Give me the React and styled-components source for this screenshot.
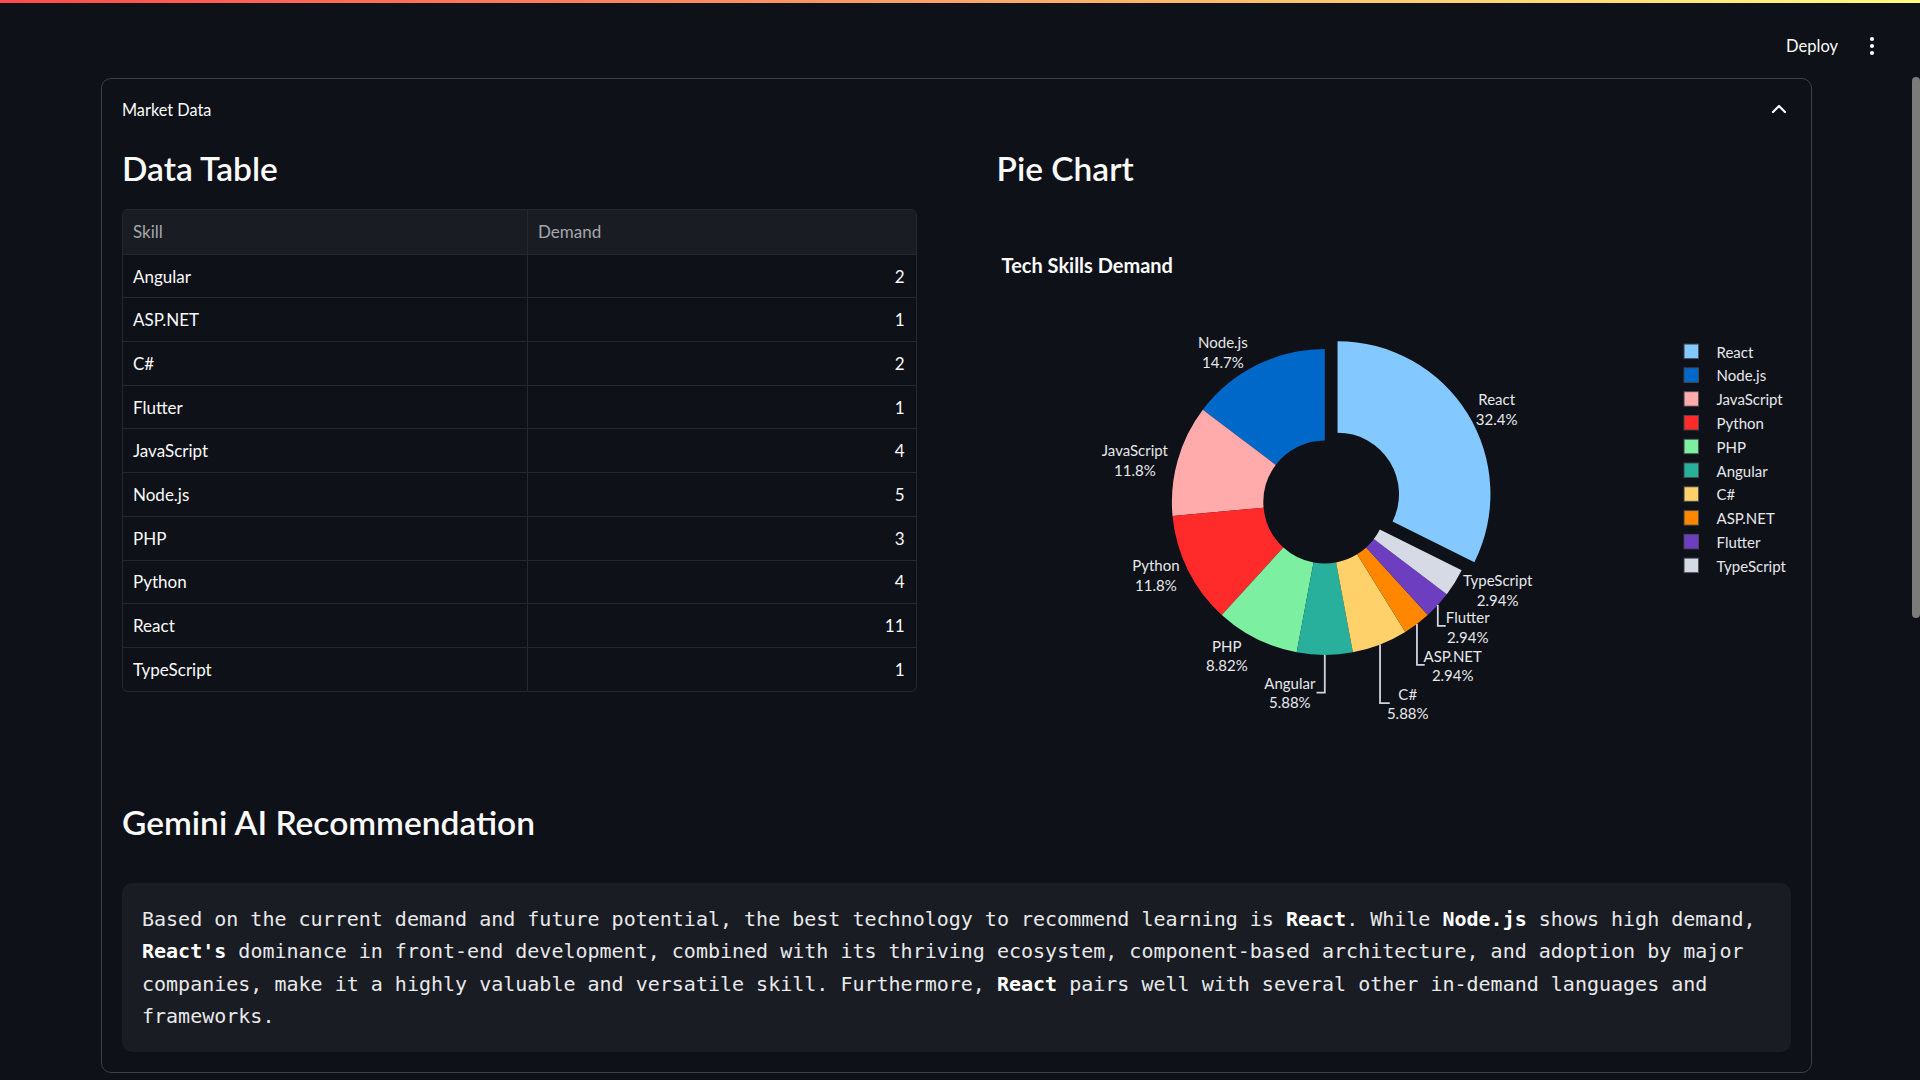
import React from 'react';
import styled, { createGlobalStyle } from 'styled-components';
import { ChevronUp, EllipsisVertical } from 'lucide-react';

const GlobalStyle = createGlobalStyle`
  html, body {
    margin: 0;
    padding: 0;
    background: #0e1117;
    color: #fafafa;
    font-family: "Source Sans Pro", Lato, "Noto Sans", sans-serif;
    overflow: hidden;
  }
  * { box-sizing: border-box; }
`;

const skills = [
  { name: 'Angular', demand: 2 },
  { name: 'ASP.NET', demand: 1 },
  { name: 'C#', demand: 2 },
  { name: 'Flutter', demand: 1 },
  { name: 'JavaScript', demand: 4 },
  { name: 'Node.js', demand: 5 },
  { name: 'PHP', demand: 3 },
  { name: 'Python', demand: 4 },
  { name: 'React', demand: 11 },
  { name: 'TypeScript', demand: 1 },
];

// legend order (sorted by value), label offsets from the pie centre
const slices = [
  { name: 'React', value: 11, color: '#83c9ff', pct: '32.4%', label: [172, -103], pull: 15 },
  { name: 'Node.js', value: 5, color: '#0068c9', pct: '14.7%', label: [-102, -160] },
  { name: 'JavaScript', value: 4, color: '#ffabab', pct: '11.8%', label: [-190, -52] },
  { name: 'Python', value: 4, color: '#ff2b2b', pct: '11.8%', label: [-169, 63] },
  { name: 'PHP', value: 3, color: '#7defa1', pct: '8.82%', label: [-98, 144] },
  { name: 'Angular', value: 2, color: '#29b09d', pct: '5.88%', label: [-35, 181], leader: { down: 190.7, end: -8.3 } },
  { name: 'C#', value: 2, color: '#ffd16a', pct: '5.88%', label: [83, 192], leader: { down: 201.3, end: 65 } },
  { name: 'ASP.NET', value: 1, color: '#ff8700', pct: '2.94%', label: [128, 154], leader: { down: 163, end: 100 } },
  { name: 'Flutter', value: 1, color: '#6d3fc0', pct: '2.94%', label: [143, 115], leader: { down: 124, end: 121 } },
  { name: 'TypeScript', value: 1, color: '#d5dae5', pct: '2.94%', label: [173, 78] },
];

const CX = 328;
const CY = 293;
const R = 153;
const RI = 61.5;

const pt = (angle, radius, dx = 0, dy = 0) => {
  const a = (angle * Math.PI) / 180;
  return [CX + dx + radius * Math.sin(a), CY + dy - radius * Math.cos(a)];
};

const slicePath = (a0, a1, pull = 0) => {
  const mid = ((a0 + a1) / 2) * Math.PI / 180;
  const dx = pull * Math.sin(mid);
  const dy = -pull * Math.cos(mid);
  const large = a1 - a0 > 180 ? 1 : 0;
  const [x0, y0] = pt(a0, R, dx, dy);
  const [x1, y1] = pt(a1, R, dx, dy);
  const [x2, y2] = pt(a1, RI, dx, dy);
  const [x3, y3] = pt(a0, RI, dx, dy);
  return `M${x0} ${y0} A${R} ${R} 0 ${large} 1 ${x1} ${y1} L${x2} ${y2} A${RI} ${RI} 0 ${large} 0 ${x3} ${y3} Z`;
};

const total = slices.reduce((s, d) => s + d.value, 0);
let cursor = (360 * slices[0].value) / total;
const arcs = slices.map((d) => {
  const sweep = (360 * d.value) / total;
  const a1 = cursor;
  const a0 = cursor - sweep;
  cursor = a0;
  return { ...d, a0, a1 };
});

const TopBar = styled.div`
  height: 3px;
  background: linear-gradient(90deg, rgb(255, 75, 75), rgb(255, 253, 128));
`;

const Header = styled.header`
  height: 75px;
  display: flex;
  justify-content: flex-end;
  align-items: center;
  padding: 10px 36px 0 0;
`;

const DeployButton = styled.span`
  font-size: 16.5px;
  color: #fafafa;
  margin-right: 22px;
`;

const MenuIcon = styled.span`
  display: flex;
  color: #fafafa;
`;

const ScrollThumb = styled.div`
  position: absolute;
  top: 77px;
  right: 0;
  width: 8px;
  height: 541px;
  border-radius: 4px;
  background: #7b7b7b;
`;

const Expander = styled.section`
  margin-left: 101px;
  width: 1711px;
  border: 1px solid rgb(61, 64, 68);
  border-radius: 10px;
`;

const Summary = styled.div`
  height: 60px;
  padding: 0 20px;
  display: flex;
  align-items: center;
  justify-content: space-between;
  font-size: 16.3px;
  color: #fafafa;
`;

const Body = styled.div`
  padding: 0 20px 20px;
`;

const Columns = styled.div`
  display: grid;
  grid-template-columns: 1fr 1fr;
  column-gap: 80px;
  margin-top: 8px;
`;

const Heading = styled.h3`
  margin: ${(p) => p.$top || 0}px 0 ${(p) => p.$bottom ?? 20}px;
  font-size: 33.5px;
  line-height: 42px;
  font-weight: 600;
  color: #fafafa;
`;

const Table = styled.div`
  border: 1px solid #26282f;
  border-radius: 6px;
  overflow: hidden;
`;

const Row = styled.div`
  display: grid;
  grid-template-columns: 404px 1fr;
  height: 43.7px;
  background: ${(p) => (p.$head ? '#1a1c23' : 'transparent')};
  border-top: ${(p) => (p.$head ? 'none' : '1px solid #26282f')};
`;

const Cell = styled.div`
  display: flex;
  align-items: center;
  justify-content: ${(p) => (p.$num ? 'flex-end' : 'flex-start')};
  padding: 0 11px 0 10px;
  font-size: 17px;
  color: ${(p) => (p.$head ? '#a3a6ad' : '#fafafa')};
  & + & {
    border-left: 1px solid #26282f;
  }
`;

const Chart = styled.svg`
  display: block;
  width: 100%;
  height: 560px;
  overflow: visible;

  text {
    font-family: "Source Sans Pro", Lato, "Noto Sans", sans-serif;
    font-size: 15px;
    fill: #e6e8ec;
  }
  .title {
    font-size: 20px;
    font-weight: 700;
    fill: #fafafa;
  }
`;

const CodeBlock = styled.div`
  background: #1a1c23;
  border-radius: 10px;
  padding: 20px;
  font-family: "DejaVu Sans Mono", "Liberation Mono", monospace;
  font-size: 20px;
  line-height: 32.3px;
  color: #e8e9eb;

  b {
    color: #ffffff;
    font-weight: 700;
  }
`;

const PieChart = () => (
  <Chart viewBox="0 0 795 560">
    <text className="title" x="4.6" y="55.5" dominantBaseline="central">Tech Skills Demand</text>
    {arcs.map((d) => (
      <path key={d.name} d={slicePath(d.a0, d.a1, d.pull)} fill={d.color} />
    ))}
    {arcs.filter((d) => d.leader).map((d) => {
      const [sx, sy] = pt((d.a0 + d.a1) / 2, R);
      const y = CY + d.leader.down;
      return (
        <polyline
          key={d.name}
          points={`${sx},${sy} ${sx},${y} ${CX + d.leader.end},${y}`}
          fill="none"
          stroke="#d0d4dc"
          strokeWidth="1.8"
        />
      );
    })}
    {arcs.map((d) => (
      <g key={d.name}>
        <text x={CX + d.label[0]} y={CY + d.label[1]} textAnchor="middle" dominantBaseline="central">{d.name}</text>
        <text x={CX + d.label[0]} y={CY + d.label[1] + 19.6} textAnchor="middle" dominantBaseline="central">{d.pct}</text>
      </g>
    ))}
    {slices.map((d, i) => (
      <g key={d.name}>
        <rect x="687.5" y={135 + i * 23.8} width="14.5" height="14.5" fill={d.color} stroke="rgba(70,74,82,0.9)" strokeWidth="1" />
        <text x="720" y={142.5 + i * 23.8} dominantBaseline="central">{d.name}</text>
      </g>
    ))}
  </Chart>
);

const App = () => (
  <>
    <GlobalStyle />
    <TopBar />
    <Header>
      <DeployButton>Deploy</DeployButton>
      <MenuIcon><EllipsisVertical size={24} strokeWidth={2.2} /></MenuIcon>
    </Header>
    <ScrollThumb />
    <Expander>
      <Summary>
        <span>Market Data</span>
        <ChevronUp size={24} strokeWidth={2.2} />
      </Summary>
      <Body>
        <Columns>
          <div>
            <Heading>Data Table</Heading>
            <Table>
              <Row $head>
                <Cell $head>Skill</Cell>
                <Cell $head>Demand</Cell>
              </Row>
              {skills.map((s) => (
                <Row key={s.name}>
                  <Cell>{s.name}</Cell>
                  <Cell $num>{s.demand}</Cell>
                </Row>
              ))}
            </Table>
          </div>
          <div>
            <Heading>Pie Chart</Heading>
            <PieChart />
          </div>
        </Columns>
        <Heading $top={32} $bottom={40}>Gemini AI Recommendation</Heading>
        <CodeBlock>
          Based on the current demand and future potential, the best technology to recommend learning is <b>React</b>. While <b>Node.js</b> shows high demand, <b>React's</b> dominance in front-end development, combined with its thriving ecosystem, component-based architecture, and adoption by major companies, make it a highly valuable and versatile skill. Furthermore, <b>React</b> pairs well with several other in-demand languages and frameworks.
        </CodeBlock>
      </Body>
    </Expander>
  </>
);

export default App;
